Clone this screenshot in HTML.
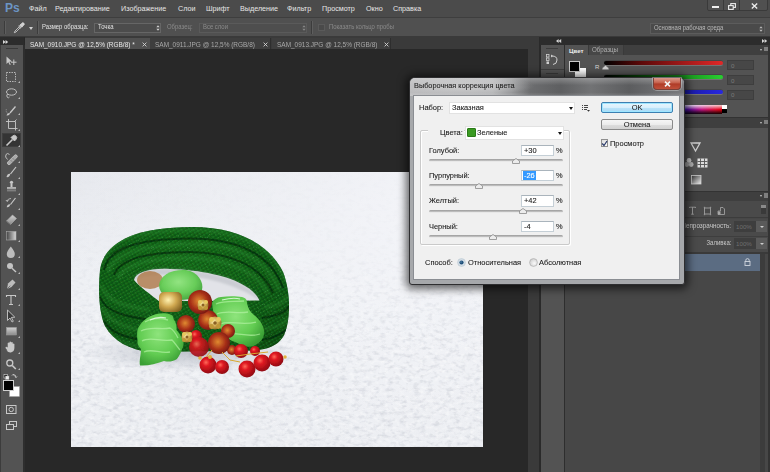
<!DOCTYPE html>
<html><head><meta charset="utf-8">
<style>
*{margin:0;padding:0;box-sizing:border-box}
html,body{width:770px;height:472px;overflow:hidden;background:#282828;font-family:"Liberation Sans",sans-serif}
.a{position:absolute}
.t{position:absolute;white-space:nowrap;line-height:1}
.dt{transform:scaleX(0.92);transform-origin:0 0;-webkit-text-stroke:0.1px currentColor}
#menubar{left:0;top:0;width:770px;height:17px;background:#4b4b4b}
#menubar .t{top:5px;font-size:7.2px;color:#e6e6e6}
#optbar{left:0;top:17px;width:770px;height:20px;background:#505050;border-top:1px solid #3e3e3e;border-bottom:1px solid #3a3a3a}
#tabbar{left:25px;top:37px;width:504px;height:12px;background:#3a3a3a}
#toolbox{left:0;top:37px;width:24px;height:435px;background:#535353}
#dock{left:528px;top:37px;width:242px;height:435px;background:#484848}
</style></head><body>
<div id="menubar" class="a">
  <div class="t" style="left:5px;top:2px;font-size:12px;font-weight:bold;color:#6c95c4">Ps</div>
  <div class="t" style="left:29px">Файл</div>
  <div class="t" style="left:55px">Редактирование</div>
  <div class="t" style="left:121px">Изображение</div>
  <div class="t" style="left:178px">Слои</div>
  <div class="t" style="left:206px">Шрифт</div>
  <div class="t" style="left:240px">Выделение</div>
  <div class="t" style="left:287px">Фильтр</div>
  <div class="t" style="left:322px">Просмотр</div>
  <div class="t" style="left:366px">Окно</div>
  <div class="t" style="left:393px">Справка</div>
  <div class="a" style="left:706.5px;top:-1px;width:61px;height:11.5px;background:#505050;border:1px solid #3a3a3a;border-radius:0 0 2px 2px"></div>
  <div class="a" style="left:723px;top:0;width:1px;height:10.5px;background:#3a3a3a"></div>
  <div class="a" style="left:739px;top:0;width:1px;height:10.5px;background:#3a3a3a"></div>
  <div class="a" style="left:712px;top:6px;width:6.5px;height:1.8px;background:#eee"></div>
  <svg class="a" style="left:727.5px;top:2.5px" width="8" height="7" viewBox="0 0 8 7"><rect x="2.8" y="0.6" width="4.6" height="3.8" fill="none" stroke="#eee" stroke-width="1.1"/><rect x="0.6" y="2.6" width="4.6" height="3.8" fill="#505050" stroke="#eee" stroke-width="1.1"/></svg>
  <svg class="a" style="left:750.5px;top:3px" width="7" height="6" viewBox="0 0 7 6"><path d="M0.8 0.5 L6.2 5.5 M6.2 0.5 L0.8 5.5" stroke="#eee" stroke-width="1.3"/></svg>
</div>
<div id="optbar" class="a">
  <div class="a" style="left:4px;top:3px;width:2px;height:13px;border-left:1px solid #3c3c3c;border-right:1px solid #5e5e5e"></div>
  <svg class="a" style="left:13px;top:4px" width="12" height="12" viewBox="0 0 12 12"><path d="M1.3 10.7 L2 9 L6.3 4.7 L7.3 5.7 L3 10 Z" stroke="#d4d4d4" stroke-width="0.8" fill="none"/><path d="M5.6 4 L8 6.4 M6.8 3.4 L9 1.2 a1 1 0 0 1 1.8 1.8 L8.6 5.2 Z" stroke="#dcdcdc" stroke-width="1" fill="#d0d0d0"/></svg>
  <div class="a" style="left:29px;top:9px;width:0;height:0;border-left:2.5px solid transparent;border-right:2.5px solid transparent;border-top:3px solid #d0d0d0"></div>
  <div class="a" style="left:37px;top:3px;width:2px;height:13px;border-left:1px solid #3c3c3c;border-right:1px solid #5e5e5e"></div>
  <div class="t" style="left:42px;top:5.6px;font-size:6.6px;transform:scaleX(0.9);transform-origin:0 0;color:#e4e4e4">Размер образца:</div>
  <div class="a" style="left:94px;top:4.5px;width:67px;height:10px;background:#4c4c4c;border:1px solid #666"></div>
  <div class="t" style="left:98px;top:6px;font-size:6.6px;transform:scaleX(0.9);transform-origin:0 0;color:#e0e0e0">Точка</div>
  <svg class="a" style="left:155.5px;top:7px" width="4" height="6" viewBox="0 0 4 6"><path d="M0.3 2.3 L2 0.3 L3.7 2.3Z M0.3 3.7 L2 5.7 L3.7 3.7Z" fill="#d0d0d0"/></svg>
  <div class="t" style="left:167px;top:5.6px;font-size:6.6px;transform:scaleX(0.9);transform-origin:0 0;color:#8a8a8a">Образец:</div>
  <div class="a" style="left:199px;top:4.5px;width:108px;height:10px;background:#4e4e4e;border:1px solid #5a5a5a"></div>
  <div class="t" style="left:203px;top:6px;font-size:6.6px;transform:scaleX(0.9);transform-origin:0 0;color:#8c8c8c">Все слои</div>
  <svg class="a" style="left:301.5px;top:7px" width="4" height="6" viewBox="0 0 4 6"><path d="M0.3 2.3 L2 0.3 L3.7 2.3Z M0.3 3.7 L2 5.7 L3.7 3.7Z" fill="#888"/></svg>
  <div class="a" style="left:311px;top:3px;width:2px;height:13px;border-left:1px solid #3c3c3c;border-right:1px solid #5e5e5e"></div>
  <div class="a" style="left:318px;top:6px;width:7px;height:7px;background:#4a4a4a;border:1px solid #5a5a5a"></div>
  <div class="t" style="left:329px;top:6px;font-size:6.6px;transform:scaleX(0.9);transform-origin:0 0;color:#8a8a8a">Показать кольцо пробы</div>
  <div class="a" style="left:650px;top:5px;width:115px;height:11px;background:#4a4a4a;border:1px solid #5c5c5c"></div>
  <div class="t" style="left:654px;top:6.6px;font-size:6.6px;transform:scaleX(0.9);transform-origin:0 0;color:#b8b8b8">Основная рабочая среда</div>
  <svg class="a" style="left:758.5px;top:7.5px" width="4" height="6" viewBox="0 0 4 6"><path d="M0.3 2.3 L2 0.3 L3.7 2.3Z M0.3 3.7 L2 5.7 L3.7 3.7Z" fill="#b8b8b8"/></svg>
</div>
<div id="tabbar" class="a">
  <div class="a" style="left:0;top:1px;width:125px;height:11px;background:#505050"></div>
  <div class="t" style="left:5px;top:3.6px;font-size:7.2px;transform:scaleX(0.9);transform-origin:0 0;color:#e8e8e8">SAM_0910.JPG @ 12,5% (RGB/8) *</div>
  <svg class="a" style="left:116.5px;top:5px" width="5" height="5" viewBox="0 0 5 5"><path d="M0.6 0.6 L4.4 4.4 M4.4 0.6 L0.6 4.4" stroke="#d4d4d4" stroke-width="0.9"/></svg>
  <div class="a" style="left:125px;top:1px;width:121px;height:11px;background:#3e3e3e;border-right:1px solid #2e2e2e"></div>
  <div class="t" style="left:130px;top:3.6px;font-size:7.2px;transform:scaleX(0.9);transform-origin:0 0;color:#a8a8a8">SAM_0911.JPG @ 12,5% (RGB/8)</div>
  <svg class="a" style="left:237.5px;top:5px" width="5" height="5" viewBox="0 0 5 5"><path d="M0.6 0.6 L4.4 4.4 M4.4 0.6 L0.6 4.4" stroke="#d4d4d4" stroke-width="0.9"/></svg>
  <div class="a" style="left:247px;top:1px;width:119px;height:11px;background:#3e3e3e;border-right:1px solid #2e2e2e"></div>
  <div class="t" style="left:252px;top:3.6px;font-size:7.2px;transform:scaleX(0.9);transform-origin:0 0;color:#a8a8a8">SAM_0913.JPG @ 12,5% (RGB/8)</div>
  <svg class="a" style="left:358.5px;top:5px" width="5" height="5" viewBox="0 0 5 5"><path d="M0.6 0.6 L4.4 4.4 M4.4 0.6 L0.6 4.4" stroke="#d4d4d4" stroke-width="0.9"/></svg>
</div>

<div id="toolbox" class="a">
  <div class="a" style="left:0;top:0;width:24px;height:8px;background:#2c2c2c"></div>
  <svg class="a" style="left:2.5px;top:2.5px" width="6" height="4" viewBox="0 0 6 4"><path d="M0 0 L2.6 2 L0 4Z M2.6 0 L5.2 2 L2.6 4Z" fill="#d6d6d6"/></svg>
  <div class="a" style="left:0;top:8px;width:1px;height:427px;background:#3c3c3c"></div>
  <div class="a" style="left:23px;top:8px;width:2px;height:427px;background:#2e2e2e"></div>
  <div class="a" style="left:6px;top:11px;width:12px;height:1px;background:#3a3a3a"></div>
  <div class="a" style="left:2px;top:96px;width:19px;height:14px;background:#343434;border:1px solid #3e3e3e"></div>
  <svg class="a" style="left:0;top:0" width="24" height="435" viewBox="0 37 24 435">
   <defs>
    <linearGradient id="tg1" x1="0" y1="0" x2="1" y2="0"><stop offset="0" stop-color="#444"/><stop offset="1" stop-color="#d8d8d8"/></linearGradient>
    <linearGradient id="tg2" x1="0" y1="0" x2="0" y2="1"><stop offset="0" stop-color="#d0d0d0"/><stop offset="1" stop-color="#8a8a8a"/></linearGradient>
   </defs>
   <g stroke="#c8c8c8" fill="none" stroke-width="0.9">
    <!-- move -->
    <path d="M6.5 56.5 L6.5 64 L8.3 62.3 L9.8 65 L10.8 64.5 L9.4 61.8 L12 61.5 Z" fill="#c8c8c8" stroke="none"/>
    <path d="M13.8 59.5 v5.5 M11 62.2 h5.5" stroke-width="1"/>
    <!-- marquee -->
    <rect x="6.5" y="72.5" width="9" height="9" stroke-dasharray="1.4 1.1"/>
    <!-- lasso -->
    <ellipse cx="11.5" cy="92" rx="5" ry="3.2"/>
    <path d="M7.5 94 q-1.5 2 0 3.5 q1 0.8 2 -0.5"/>
    <!-- quick select -->
    <path d="M6.5 109 a3.5 3.5 0 0 0 3 5" stroke-dasharray="1 0.8" stroke="#9a9a9a"/>
    <path d="M10 113 L15.5 106.5" stroke-width="1.3"/>
    <path d="M10 113 q-3 -0.5 -3.5 2.5 q3 0.5 3.5 -2.5" fill="#c8c8c8" stroke="none"/>
    <!-- crop -->
    <path d="M8.5 119 v9.5 h9 M6 121.5 h9.5 v9 M16.5 119.5 l-2.5 2.5"/>
    <!-- eyedropper (selected) -->
    <path d="M6.5 145.5 L12.5 139.5" stroke-width="1.6"/>
    <path d="M11.5 137.5 l3 3 M12.5 136 a1.8 1.8 0 0 1 3.5 3.5 l-1.5 1.5 l-3.5 -3.5z" fill="#c8c8c8" stroke-width="0.8"/>
    <!-- healing -->
    <path d="M7.5 159.5 q-3 -2.5 -1.5 -5 q1.5 -2 3.5 0"/>
    <path d="M7.8 162 L14.5 155.3 a1.6 1.6 0 0 1 2.3 2.3 L10 164.3 a1.6 1.6 0 0 1 -2.2 -2.3z" fill="#a8a8a8" stroke="#c8c8c8" stroke-width="0.8"/>
    <path d="M10.5 160 l2 2 M12.5 158 l2 2" stroke="#707070" stroke-width="0.6"/>
    <!-- brush -->
    <path d="M16 167 L10.5 174" stroke-width="1.2"/>
    <path d="M10.3 173.8 q-3 -0.5 -3.8 3.3 q3.2 0.4 3.8 -3.3" fill="#c8c8c8" stroke="none"/>
    <!-- stamp -->
    <circle cx="11.5" cy="182.3" r="1.6" fill="#c8c8c8" stroke="none"/>
    <path d="M10.5 183.5 h2 v3.5 h-2z" fill="#c8c8c8" stroke="none"/>
    <path d="M7 187.2 h9 v2.3 h-9z" fill="url(#tg2)" stroke="none"/>
    <path d="M7 190.8 h9" stroke="#9a9a9a"/>
    <!-- history brush -->
    <path d="M15.5 198 L10.5 204.5" stroke-width="1.2"/>
    <path d="M10.3 204.3 q-3 -0.4 -3.6 3 q3 0.4 3.6 -3" fill="#c8c8c8" stroke="none"/>
    <path d="M7 201 q1 -2.5 4 -2.5" stroke="#bdbdbd"/>
    <path d="M6 200 l1 1.5 l1.5 -1" stroke="#bdbdbd"/>
    <!-- eraser -->
    <path d="M6.5 221 L12.5 215 L16.5 218.5 L10.5 224.5 Z" fill="url(#tg2)" stroke="#b0b0b0" stroke-width="0.6"/>
    <path d="M6.5 221 L10.5 224.5" stroke="#707070"/>
    <!-- gradient -->
    <rect x="6.5" y="231.5" width="9.5" height="8.5" fill="url(#tg1)" stroke="#a8a8a8" stroke-width="0.6"/>
    <!-- blur drop -->
    <path d="M10.8 246.5 q-4 5 -4 7.5 a4 4 0 0 0 8 0 q0 -2.5 -4 -7.5z" fill="#bdbdbd" stroke="none"/>
    <!-- dodge -->
    <circle cx="10" cy="266" r="3" fill="#c4c4c4" stroke="none"/>
    <path d="M12 268.2 L16 272" stroke-width="1.4"/>
    <!-- pen -->
    <path d="M7 289 L8 283.5 L12.5 279.5 L15.5 282.5 L11.5 287 Z" fill="#bdbdbd" stroke="none"/>
    <path d="M7 289 L10.3 285.7" stroke="#535353" stroke-width="0.7"/>
    <!-- type -->
    <path d="M6.5 297 v-1.5 h9 v1.5 M11 295.5 v9 M9 304.5 h4" stroke-width="1.1"/>
    <!-- path selection -->
    <path d="M7.5 310 L7.5 320.5 L10 318 L12 322 L13.3 321.3 L11.4 317.4 L14.8 317.2 Z" fill="#3a3a3a" stroke="#c8c8c8" stroke-width="0.9"/>
    <!-- shape -->
    <rect x="6.5" y="327.5" width="10" height="7.5" fill="url(#tg2)" stroke="#a0a0a0" stroke-width="0.5"/>
    <!-- hand -->
    <path d="M7.5 350.5 q-2.5 -2.5 -1.8 -3.5 q0.8 -0.8 2 0.6 v-4.5 q0.9 -1 1.7 0 v3 v-4 q0.9 -1 1.7 0 v4 v-3.5 q0.9 -1 1.7 0 v3.8 v-2.5 q0.9 -0.8 1.6 0 v4 q0 3.5 -3.5 4.5 q-2.5 0.3 -4.4 -2" fill="#c8c8c8" stroke="none"/>
    <!-- zoom -->
    <circle cx="9.8" cy="363" r="3" stroke-width="1.3"/>
    <path d="M12.3 365.5 L15.8 369" stroke-width="1.7"/>
   </g>
   <g fill="#b8b8b8">
    <path d="M18 83 l2 -2 v2z M18 99 l2 -2 v2z M18 115 l2 -2 v2z M18 131 l2 -2 v2z M18 147 l2 -2 v2z M18 163 l2 -2 v2z M18 179 l2 -2 v2z M18 195 l2 -2 v2z M18 210 l2 -2 v2z M18 226 l2 -2 v2z M18 242 l2 -2 v2z M18 258 l2 -2 v2z M18 274 l2 -2 v2z M18 290 l2 -2 v2z M18 306 l2 -2 v2z M18 322 l2 -2 v2z M18 338 l2 -2 v2z M18 354 l2 -2 v2z M18 370 l2 -2 v2z"/>
   </g>
   <!-- colors -->
   <rect x="4" y="374.5" width="3.5" height="3.5" fill="#111" stroke="#ddd" stroke-width="0.6"/>
   <rect x="5.5" y="376" width="3.5" height="3.5" fill="#eee" stroke="#999" stroke-width="0.4"/>
   <path d="M13 374.5 q3 0 3 3 M12 375.5 l1 -1 l1 1 M15 376.5 l1 1 l1 -1" stroke="#ddd" fill="none" stroke-width="0.8"/>
   <rect x="9.5" y="386.5" width="10" height="10" fill="#fff" stroke="#a0a0a0" stroke-width="0.5"/>
   <rect x="3.5" y="380.5" width="10" height="10" fill="#000" stroke="#cfcfcf" stroke-width="1"/>
   <!-- quick mask -->
   <rect x="6.5" y="405.5" width="9.5" height="8" fill="none" stroke="#c8c8c8"/>
   <circle cx="11.2" cy="409.5" r="2.2" fill="none" stroke="#c8c8c8"/>
   <!-- screen mode -->
   <rect x="9.5" y="421.5" width="7" height="5" fill="none" stroke="#c8c8c8"/>
   <rect x="6.5" y="424.5" width="7" height="5" fill="#535353" stroke="#c8c8c8"/>
  </svg>
</div>


<!--PHOTO--><svg class="a" style="left:71px;top:172px" width="412" height="275" viewBox="71 172 412 275">
  <defs>
    <linearGradient id="bgv" x1="0" y1="0" x2="0" y2="1">
      <stop offset="0" stop-color="#e6e8ed"/>
      <stop offset="0.4" stop-color="#eef0f4"/>
      <stop offset="1" stop-color="#eceef2"/>
    </linearGradient>
    <radialGradient id="bgr" cx="0.85" cy="0.15" r="0.9">
      <stop offset="0" stop-color="#f4f5f9" stop-opacity="0.9"/>
      <stop offset="1" stop-color="#f4f5f9" stop-opacity="0"/>
    </radialGradient>
    <filter id="tex" x="0" y="0" width="100%" height="100%">
      <feTurbulence type="fractalNoise" baseFrequency="0.15 0.26" numOctaves="3" seed="3"/>
      <feColorMatrix type="matrix" values="0 0 0 0 0.66  0 0 0 0 0.68  0 0 0 0 0.73  0 0 0 -2.6 1.38"/>
    </filter>
    <filter id="tex2" x="0" y="0" width="100%" height="100%">
      <feTurbulence type="fractalNoise" baseFrequency="0.2 0.3" numOctaves="2" seed="11"/>
      <feColorMatrix type="matrix" values="0 0 0 0 1  0 0 0 0 1  0 0 0 0 1  0 0 0 2.6 -1.25"/>
    </filter>
    <linearGradient id="tmg" x1="0" y1="0" x2="0" y2="1">
      <stop offset="0" stop-color="#fff" stop-opacity="0.06"/>
      <stop offset="0.28" stop-color="#fff" stop-opacity="0.18"/>
      <stop offset="0.6" stop-color="#fff" stop-opacity="0.9"/>
      <stop offset="1" stop-color="#fff" stop-opacity="1"/>
    </linearGradient>
    <mask id="texmask" maskUnits="userSpaceOnUse" x="71" y="172" width="412" height="275"><rect x="71" y="172" width="412" height="275" fill="url(#tmg)"/></mask>
    <filter id="soft" x="-5%" y="-5%" width="110%" height="110%"><feGaussianBlur stdDeviation="0.6"/></filter><filter id="blur1"><feGaussianBlur stdDeviation="1"/></filter><filter id="blur05"><feGaussianBlur stdDeviation="0.5"/></filter>
    <filter id="btex" x="0" y="0" width="100%" height="100%">
      <feTurbulence type="turbulence" baseFrequency="0.55 0.7" numOctaves="1" seed="7"/>
      <feColorMatrix type="matrix" values="0 0 0 0 0.25  0 0 0 0 0.62  0 0 0 0 0.28  0 0 0 3 -1.1"/>
      <feComposite in2="SourceGraphic" operator="in"/>
    </filter>
    <pattern id="beads" width="3.4" height="3.2" patternUnits="userSpaceOnUse" patternTransform="rotate(-30)">
      <rect width="3.4" height="3.2" fill="#083c0b"/>
      <ellipse cx="1.7" cy="1.6" rx="1.55" ry="1.3" fill="#126a19"/>
      <ellipse cx="1.3" cy="1.15" rx="0.75" ry="0.55" fill="#2a9032"/>
    </pattern>
    <radialGradient id="grn" cx="0.45" cy="0.35" r="0.75">
      <stop offset="0" stop-color="#1a7a20"/>
      <stop offset="0.7" stop-color="#0f5a14"/>
      <stop offset="1" stop-color="#0a400d"/>
    </radialGradient>
    <radialGradient id="leaf" cx="0.45" cy="0.4" r="0.65">
      <stop offset="0" stop-color="#8ee47c"/>
      <stop offset="0.6" stop-color="#62cc52"/>
      <stop offset="1" stop-color="#3a9e34"/>
    </radialGradient>
    <radialGradient id="red" cx="0.38" cy="0.35" r="0.7">
      <stop offset="0" stop-color="#ff6a5a"/>
      <stop offset="0.3" stop-color="#e01a22"/>
      <stop offset="1" stop-color="#8a0810"/>
    </radialGradient>
    <radialGradient id="amb" cx="0.45" cy="0.45" r="0.7">
      <stop offset="0" stop-color="#e08a30"/>
      <stop offset="0.5" stop-color="#a83018"/>
      <stop offset="1" stop-color="#5a0c0c"/>
    </radialGradient>
    <radialGradient id="gold" cx="0.4" cy="0.4" r="0.7">
      <stop offset="0" stop-color="#fff2b0"/>
      <stop offset="0.5" stop-color="#d0a850"/>
      <stop offset="1" stop-color="#806020"/>
    </radialGradient>
    <radialGradient id="shad" cx="0.5" cy="0.5" r="0.5">
      <stop offset="0" stop-color="#a0a6b2" stop-opacity="0.6"/>
      <stop offset="1" stop-color="#a0a6b2" stop-opacity="0"/>
    </radialGradient>
    <clipPath id="bclip"><path id="bpath" d="M192 227 C240 227 270 246 283 272 C291 292 291 322 283 337 C277 346 268 349 255 350.5 L150 352 C130 350 113 341 105 326 C99 313 98 290 100 270 C103 248 125 227 192 227 Z"/></clipPath>
  </defs>
  <rect x="71" y="172" width="412" height="275" fill="url(#bgv)"/>
  <rect x="71" y="172" width="412" height="275" fill="url(#bgr)"/>
  <g mask="url(#texmask)">
    <rect x="71" y="172" width="412" height="275" filter="url(#tex)" opacity="0.85"/>
    <rect x="71" y="172" width="412" height="275" filter="url(#tex2)" opacity="0.5"/>
  </g>
  <ellipse cx="190" cy="352" rx="105" ry="20" fill="url(#shad)"/>
<g filter="url(#soft)" id="softall">
  <!-- bracelet -->
  <g clip-path="url(#bclip)">
    <rect x="95" y="220" width="200" height="140" fill="url(#beads)"/>
    <rect x="95" y="220" width="200" height="140" fill="url(#grn)" opacity="0.5"/>
    <rect x="95" y="220" width="200" height="140" fill="#3aa040" filter="url(#btex)" opacity="0.35"/>
    <g fill="none" stroke="#3fa846" stroke-width="4" opacity="0.22" filter="url(#blur1)">
      <path d="M103 262 C108 240 135 231 190 230 C245 230 276 250 286 282"/>
      <path d="M108 272 C113 254 140 245 190 244 C240 244 268 261 279 290"/>
      <path d="M118 278 C125 264 150 258 190 258 C230 259 258 273 268 294"/>
      <path d="M101 285 C106 300 120 306 150 310"/>
      <path d="M102 308 C110 322 124 328 150 332"/>
      <path d="M107 331 C115 341 126 345 150 348"/>
      <path d="M287 296 C285 302 278 306 264 307"/>
      <path d="M288 318 C284 324 276 328 264 329"/>
    </g>
    <g fill="none" stroke="#04200a" stroke-width="2" opacity="0.6" filter="url(#blur05)">
      <path d="M104 270 C108 249 135 239 190 238.5 C240 238.5 272 256 283 288"/>
      <path d="M114 275 C120 258 148 252 190 252 C232 252.5 262 267 273 293"/>
      <path d="M100 297 C105 311 122 317 160 321"/>
      <path d="M104 321 C111 333 124 338 155 342"/>
      <path d="M289 306 C286 312 276 316 262 318"/>
      <path d="M288 328 C283 334 274 338 262 340"/>
    </g>
  </g>
  <!-- hole -->
  <path d="M134 280 C136 272 150 268 170 269 C200 270 230 276 245 286 C252 290 257 295 259.5 300.5 L200 301 C180 301 168 300 160 302 C150 294 140 287 134 280 Z" fill="#e2e3e8"/>
  <path d="M134 280 C136 272 150 268 170 269 C200 270 230 276 245 286 C252 290 257 295 259.5 300.5 C248 292 225 281 195 277 C170 274 148 274 134 280 Z" fill="#a8acb4" opacity="0.4" filter="url(#blur1)"/>
  <!-- back items -->
  <ellipse cx="150" cy="280" rx="13" ry="9" fill="#b07a48" opacity="0.8" filter="url(#blur05)"/>
  <path d="M159 285 C160 275 172 269 186 270 C198 272 204 282 202 290 C200 296 192 300 180 300 C168 300 159 294 159 285 Z" fill="url(#leaf)" opacity="0.95"/>
  <!-- gold tube -->
  <rect x="159" y="292" width="23" height="20" rx="5" fill="url(#gold)"/>
  <!-- left leaf -->
  <path d="M137.2 332 C138 326 142 322 147 318 C153 314 161 312.5 167 313.5 C171 314 174 316 173.5 319 C176 322 177 326 176.5 330 C180 334 184 340 183.6 345 C182 351 179 356 177 359 C172 362 168 362 164 361 C156 364 148 366 140 365.5 C139 360 141 355 141 349 C138 346 137 343 137.5 340.5 C137 337 137 334 137.2 332 Z" fill="url(#leaf)"/>
  <g stroke="#b8f5a8" stroke-width="1.3" fill="none" opacity="0.65" filter="url(#blur05)">
    <path d="M145 322 C152 318 160 318 168 320"/>
    <path d="M141 331 C150 326 160 330 170 328 C174 330 176 334 178 338"/>
    <path d="M142 341 C150 336 160 342 172 340 C176 344 178 348 180 350"/>
    <path d="M144 352 C152 348 160 354 170 352"/>
  </g>
  <path d="M150 320 C156 317 162 317 166 318" stroke="#f0fff0" stroke-width="1.2" fill="none" opacity="0.8"/>
  <!-- right leaf -->
  <path d="M212 302.7 C214 299 217 297.5 221 297 C228 296 236 296 242 297 C246 298 247 300 247 303 C248 308 250 312 254 315 C259 319 263 324 264 330 C265 336 262 341 257 344 C253 347 248 347.5 244 346 C240 344 237 343 235 342 C231 341 228 339 227 336 C222 331 218 326 216 320 C214 315 212.5 309 212 302.7 Z" fill="url(#leaf)"/>
  <g stroke="#b8f5a8" stroke-width="1.3" fill="none" opacity="0.65" filter="url(#blur05)">
    <path d="M216 304 C224 300 234 302 244 301"/>
    <path d="M217 314 C226 310 236 314 248 312"/>
    <path d="M220 324 C230 320 242 326 256 322"/>
    <path d="M228 334 C238 332 248 338 260 334"/>
  </g>
  <path d="M222 300 C230 298 236 298 240 299" stroke="#f0fff0" stroke-width="1.1" fill="none" opacity="0.8"/>
  <!-- beads -->
  <circle cx="208" cy="320" r="10" fill="url(#amb)"/>
  <circle cx="228" cy="331" r="7" fill="url(#amb)"/>
  <circle cx="196" cy="336" r="6" fill="url(#red)"/>
  <circle cx="232" cy="350" r="5" fill="url(#amb)"/>
  <circle cx="200" cy="302" r="12" fill="url(#amb)"/>
  <g transform="translate(203 305)"><circle r="5.5" fill="url(#gold)"/><circle cx="-3" cy="-3" r="2" fill="#e8c860"/><circle cx="3" cy="-3" r="2" fill="#e8c860"/><circle cx="3" cy="3" r="2" fill="#c09838"/><circle cx="-3" cy="3" r="2" fill="#c09838"/><circle r="1.5" fill="#8a6020"/></g>
  <circle cx="186" cy="324" r="9" fill="url(#amb)"/>
  <circle cx="219" cy="343" r="11" fill="url(#amb)"/>
  <circle cx="199" cy="347" r="10" fill="url(#red)" opacity="0.9"/>
  <g transform="translate(215 323)"><circle r="6.5" fill="url(#gold)"/><circle cx="-3.5" cy="-3.5" r="2.4" fill="#e8c860"/><circle cx="3.5" cy="-3.5" r="2.4" fill="#e8c860"/><circle cx="3.5" cy="3.5" r="2.4" fill="#c09838"/><circle cx="-3.5" cy="3.5" r="2.4" fill="#c09838"/><circle r="1.8" fill="#8a6020"/></g>
  <g transform="translate(187 337)"><circle r="5.5" fill="url(#gold)"/><circle cx="-3" cy="-3" r="2" fill="#e8c860"/><circle cx="3" cy="-3" r="2" fill="#e8c860"/><circle cx="3" cy="3" r="2" fill="#c09838"/><circle cx="-3" cy="3" r="2" fill="#c09838"/><circle r="1.5" fill="#8a6020"/></g>
  <circle cx="241" cy="351" r="7" fill="url(#red)"/>
  <circle cx="255" cy="351" r="5" fill="url(#red)"/>
  <circle cx="208" cy="365" r="8.5" fill="url(#red)"/>
  <circle cx="222" cy="367" r="7" fill="url(#red)"/>
  <circle cx="247" cy="369" r="8.5" fill="url(#red)"/>
  <circle cx="262" cy="363" r="8.5" fill="url(#red)"/>
  <circle cx="276" cy="359" r="7.5" fill="url(#red)"/>
  <g stroke="#d8a830" stroke-width="1" fill="none">
    <path d="M222 352 L230 360 L240 362 M236 356 L250 354 L268 352 M206 357 L212 350"/>
  </g>
  <circle cx="210" cy="357" r="2" fill="#e0b040"/>
  <circle cx="285" cy="357" r="1.8" fill="#e0b040"/>
  <circle cx="200" cy="358" r="1.8" fill="#e0b040"/>
</g>
</svg>
<!--/PHOTO-->
<div id="dock" class="a">
  <!-- coords relative: x-528, y-37 -->
  <div class="a" style="left:0;top:0;width:11px;height:435px;background:#3a3a3a"></div>
  <div class="a" style="left:11px;top:0;width:2px;height:435px;background:#2a2a2a"></div>
  <div class="a" style="left:12px;top:0;width:230px;height:7.5px;background:#2c2c2c"></div>
  <svg class="a" style="left:28px;top:2px" width="6" height="4" viewBox="0 0 6 4"><path d="M2.6 0 L0 2 L2.6 4Z M5.2 0 L2.6 2 L5.2 4Z" fill="#d6d6d6"/></svg>
  <svg class="a" style="left:234px;top:2px" width="6" height="4" viewBox="0 0 6 4"><path d="M0 0 L2.6 2 L0 4Z M2.6 0 L5.2 2 L2.6 4Z" fill="#d6d6d6"/></svg>
  <!-- small icon column -->
  <div class="a" style="left:13px;top:7.5px;width:22.5px;height:428px;background:#535353"></div>
  <div class="a" style="left:35.5px;top:7.5px;width:1.5px;height:428px;background:#2e2e2e"></div>
  <div class="a" style="left:18px;top:11px;width:12px;height:1px;background:#3c3c3c"></div>
  <svg class="a" style="left:18px;top:17px" width="12" height="11" viewBox="0 0 12 11">
    <rect x="0.5" y="0.5" width="2.5" height="2.5" fill="none" stroke="#cfcfcf" stroke-width="0.8"/>
    <rect x="0.5" y="4" width="2.5" height="2.5" fill="none" stroke="#cfcfcf" stroke-width="0.8"/>
    <rect x="0.5" y="7.5" width="2.5" height="2.5" fill="#cfcfcf"/>
    <path d="M6 2 q5 0 5 4 q0 4 -4 4.5" fill="none" stroke="#cfcfcf" stroke-width="1"/>
    <path d="M5 0.5 l2 1.5 l-2 1.5z" fill="#cfcfcf"/>
  </svg>
  <div class="a" style="left:13px;top:32px;width:22.5px;height:1px;background:#3e3e3e"></div>
  <div class="a" style="left:18px;top:36px;width:12px;height:1px;background:#3c3c3c"></div>
  <!-- main panel -->
  <div class="a" style="left:37px;top:7.5px;width:202.5px;height:428px;background:#474747"></div>
  <div class="a" style="left:239.5px;top:7.5px;width:2.5px;height:428px;background:#333"></div>
  <!-- color panel -->
  <div class="a" style="left:37px;top:7.5px;width:202.5px;height:10px;background:#3f3f3f"></div>
  <div class="a" style="left:37px;top:7.5px;width:23px;height:10px;background:#535353"></div>
  <div class="t" style="left:41px;top:10.5px;font-size:6.2px;font-weight:bold;color:#ececec">Цвет</div>
  <div class="a" style="left:60px;top:7.5px;width:35.5px;height:10px;background:#474747;border-left:1px solid #3a3a3a;border-right:1px solid #3a3a3a"></div>
  <div class="t" style="left:63.5px;top:10.3px;font-size:6.6px;color:#b0b0b0;transform:scaleX(0.94);transform-origin:0 0">Образцы</div>
  <div class="a" style="left:232px;top:11.5px;width:0;height:0;border-left:1.5px solid transparent;border-right:1.5px solid transparent;border-top:2px solid #c8c8c8"></div>
  <div class="a" style="left:235.5px;top:9.5px;width:4px;height:4.5px;background:#7e7e7e"></div>
  <div class="a" style="left:37px;top:17.5px;width:202.5px;height:62px;background:#535353"></div>
  <div class="a" style="left:40.5px;top:24px;width:11px;height:11px;background:#000;border:1px solid #c8c8c8"></div>
  <div class="a" style="left:46.5px;top:30.5px;width:11px;height:9.5px;background:#fff;border-top:none"></div>
  <div class="a" style="left:40.5px;top:24px;width:11px;height:11px;background:#000;border:1px solid #c8c8c8"></div>
  <div class="t" style="left:67px;top:27px;font-size:6px;color:#d8d8d8">R</div>
  <div class="a" style="left:76px;top:23.5px;width:119px;height:4px;border-radius:2px;background:linear-gradient(90deg,#000 0%,#5a0808 30%,#e02828 100%);box-shadow:0 1px 0 #727272,0 -0.5px 0 #3a3a3a"></div>
  <svg class="a" style="left:73.5px;top:28px" width="7" height="5" viewBox="0 0 7 5"><path d="M0.5 4.5 L0.5 3 L3.5 0.5 L6.5 3 L6.5 4.5 Z" fill="#d0d0d0" stroke="#888" stroke-width="0.5"/></svg>
  <div class="a" style="left:76px;top:38px;width:119px;height:4px;border-radius:2px;background:linear-gradient(90deg,#000 0%,#084a08 30%,#28d030 100%);box-shadow:0 1px 0 #727272,0 -0.5px 0 #3a3a3a"></div>
  <div class="a" style="left:76px;top:52.5px;width:119px;height:4px;border-radius:2px;background:linear-gradient(90deg,#000 0%,#08085a 30%,#2828e0 100%);box-shadow:0 1px 0 #727272,0 -0.5px 0 #3a3a3a"></div>
  <div class="a" style="left:199px;top:23px;width:27px;height:10px;background:#474747;border:1px solid #3e3e3e"></div>
  <div class="t" style="left:203px;top:25.5px;font-size:6.2px;color:#7a7a7a">0</div>
  <div class="a" style="left:199px;top:38px;width:27px;height:10px;background:#474747;border:1px solid #3e3e3e"></div>
  <div class="t" style="left:203px;top:40.5px;font-size:6.2px;color:#7a7a7a">0</div>
  <div class="a" style="left:199px;top:52.5px;width:27px;height:10px;background:#474747;border:1px solid #3e3e3e"></div>
  <div class="t" style="left:203px;top:55px;font-size:6.2px;color:#7a7a7a">0</div>
  <div class="a" style="left:69px;top:68px;width:125px;height:8.5px;background:linear-gradient(90deg,#ff0000 0%,#ffff00 17%,#00ff00 33%,#00ffff 50%,#2020ff 67%,#5010a0 72%,#c01880 84%,#e01030 95%,#e00010 100%)"></div>
  <div class="a" style="left:69px;top:68px;width:125px;height:8.5px;background:linear-gradient(180deg,rgba(255,255,255,0.8) 0%,rgba(255,255,255,0.35) 30%,rgba(0,0,0,0) 50%,rgba(0,0,0,0.5) 75%,rgba(0,0,0,0.9) 100%)"></div>
  <div class="a" style="left:194px;top:68px;width:5px;height:4.2px;background:#fff"></div>
  <div class="a" style="left:194px;top:72.2px;width:5px;height:4.3px;background:#000"></div>
  <!-- adjustments header -->
  <div class="a" style="left:37px;top:79.5px;width:202.5px;height:11.5px;background:#3f3f3f;border-top:1px solid #333"></div>
  <div class="a" style="left:232px;top:84.5px;width:0;height:0;border-left:1.5px solid transparent;border-right:1.5px solid transparent;border-top:2px solid #c8c8c8"></div>
  <div class="a" style="left:235.5px;top:82.5px;width:4px;height:4.5px;background:#7e7e7e"></div>
  <div class="a" style="left:37px;top:91px;width:202.5px;height:62.5px;background:#535353"></div>
  <svg class="a" style="left:150px;top:100px" width="40" height="50" viewBox="0 0 40 50">
    <rect x="0" y="5" width="3" height="8" fill="none" stroke="#bdbdbd" stroke-width="0.8"/>
    <path d="M13 6 L22 6 L17.5 14 Z" fill="none" stroke="#d0d0d0" stroke-width="1.3"/>
    <circle cx="11" cy="23.5" r="2.4" fill="#c4c4c4"/><circle cx="8.8" cy="27.5" r="2.4" fill="#a0a0a0"/><circle cx="13.2" cy="27.5" r="2.4" fill="#b0b0b0"/>
    <rect x="19.5" y="21.5" width="10" height="9" fill="#ddd"/>
    <path d="M22.5 21.5 v9 M26.5 21.5 v9 M19.5 24.5 h10 M19.5 27.5 h10" stroke="#535353" stroke-width="0.9"/>
    <rect x="0" y="38" width="3" height="8" fill="none" stroke="#bdbdbd" stroke-width="0.8"/>
    <rect x="13.5" y="38.5" width="9.5" height="8.5" fill="url(#gg)" stroke="#ccc" stroke-width="0.8"/>
    <defs><linearGradient id="gg" x1="0" y1="0" x2="1" y2="1"><stop offset="0" stop-color="#333"/><stop offset="1" stop-color="#eee"/></linearGradient></defs>
  </svg>
  <!-- layers header -->
  <div class="a" style="left:37px;top:153.5px;width:202.5px;height:10.5px;background:#3f3f3f;border-top:1px solid #333"></div>
  <div class="a" style="left:232px;top:158px;width:0;height:0;border-left:1.5px solid transparent;border-right:1.5px solid transparent;border-top:2px solid #c8c8c8"></div>
  <div class="a" style="left:235.5px;top:156px;width:4px;height:4.5px;background:#7e7e7e"></div>
  <div class="a" style="left:37px;top:164px;width:202.5px;height:17px;background:#4a4a4a;border-bottom:1px solid #3c3c3c"></div>
  <svg class="a" style="left:160px;top:169px" width="50" height="10" viewBox="0 0 50 10">
    <path d="M1.5 2 v-0.8 h6 v0.8 M4.5 1.2 v7 M3.2 8.2 h2.6" stroke="#a8a8a8" stroke-width="0.8" fill="none"/>
    <rect x="16.5" y="2" width="6" height="6" fill="none" stroke="#a8a8a8" stroke-width="0.8"/>
    <path d="M15.8 1.3 h1.4 M21.8 1.3 h1.4 M15.8 8.7 h1.4 M21.8 8.7 h1.4" stroke="#a8a8a8" stroke-width="0.8"/>
    <path d="M30 8.5 v-3.5 h2.5 v-3.5 h2.5 l1.5 1.5 v5.5 z" fill="none" stroke="#a8a8a8" stroke-width="0.8"/>
    <rect x="30" y="5.5" width="2.5" height="3" fill="#a8a8a8"/>
  </svg>
  <div class="a" style="left:233px;top:168px;width:5px;height:9px;background:#3a3a3a"></div>
  <div class="a" style="left:233px;top:168px;width:5px;height:3px;background:#8a8a8a"></div>
  <div class="a" style="left:37px;top:182px;width:202.5px;height:33px;background:#4a4a4a"></div>
  <div class="a" style="left:37px;top:198.5px;width:202.5px;height:1px;background:#3e3e3e"></div>
  <div class="t" style="right:39px;top:186px;font-size:6.9px;color:#c8c8c8;transform:scaleX(0.92);transform-origin:100% 0">Непрозрачность:</div>
  <div class="a" style="left:206px;top:184px;width:22px;height:10.5px;background:#3e3e3e"></div>
  <div class="t" style="left:208px;top:186.5px;font-size:6.2px;color:#6e6e6e">100%</div>
  <div class="a" style="left:228px;top:184px;width:10.5px;height:10.5px;background:#5a5a5a"></div>
  <div class="a" style="left:231.5px;top:188.5px;width:0;height:0;border-left:2px solid transparent;border-right:2px solid transparent;border-top:2.5px solid #ccc"></div>
  <div class="t" style="right:39px;top:203px;font-size:6.9px;color:#c8c8c8;transform:scaleX(0.88);transform-origin:100% 0">Заливка:</div>
  <div class="a" style="left:206px;top:201px;width:22px;height:10.5px;background:#3e3e3e"></div>
  <div class="t" style="left:208px;top:203.5px;font-size:6.2px;color:#6e6e6e">100%</div>
  <div class="a" style="left:228px;top:201px;width:10.5px;height:10.5px;background:#5a5a5a"></div>
  <div class="a" style="left:231.5px;top:205.5px;width:0;height:0;border-left:2px solid transparent;border-right:2px solid transparent;border-top:2.5px solid #ccc"></div>
  <div class="a" style="left:37px;top:215px;width:202.5px;height:1.5px;background:#3a3a3a"></div>
  <div class="a" style="left:37px;top:216.5px;width:195px;height:17px;background:#5b6c82"></div>
  <svg class="a" style="left:216px;top:221px" width="7" height="8" viewBox="0 0 7 8">
    <path d="M1.8 3.5 v-1.2 a1.7 1.7 0 0 1 3.4 0 v1.2" fill="none" stroke="#d0d6de" stroke-width="0.9"/>
    <rect x="1" y="3.5" width="5" height="4" fill="none" stroke="#d0d6de" stroke-width="0.9"/>
  </svg>
  <div class="a" style="left:232px;top:216.5px;width:5px;height:219px;background:#3c3c3c"></div>
</div>

<div id="dlg" class="a" style="left:408.5px;top:77px;width:276px;height:207.5px;border-radius:6px 6px 3px 3px;background:#a6a8ab;box-shadow:0 1px 9px 3px rgba(0,0,0,0.6);border:1px solid #2e2e30">
  <div class="a" style="left:0;top:0;width:274px;height:18px;border-radius:5px 5px 0 0;background:linear-gradient(90deg,#bcbcbe 0%,#b4b5b7 30%,#98999b 37%,#6c6d6f 44%,#5e5f61 55%,#727375 66%,#5c5d5f 80%,#7a7b7e 100%)"></div>
  <div class="a" style="left:0;top:0;width:274px;height:18px;border-radius:5px 5px 0 0;background:linear-gradient(180deg,rgba(255,255,255,0.25),rgba(255,255,255,0) 40%,rgba(0,0,0,0) 80%,rgba(255,255,255,0.15))"></div>
  <div class="a" style="left:0;top:0;width:160px;height:17px;background:radial-gradient(ellipse 70px 9px at 55px 8px,rgba(215,215,215,0.7),rgba(215,215,215,0))"></div>
  <div class="t dt" style="left:4.5px;top:4.3px;font-size:8.1px;color:#1e1e1e;transform:scaleX(0.905)">Выборочная коррекция цвета</div>
  <div class="a" style="left:243px;top:0px;width:28.5px;height:11.5px;border-radius:0 0 4px 4px;background:linear-gradient(180deg,#dc9a8c 0%,#c86652 40%,#b03c28 55%,#c0503a 100%);border:1px solid #7a4038;border-top:none;box-shadow:0 0 0 1px rgba(255,255,255,0.3)"></div>
  <svg class="a" style="left:254px;top:2.5px" width="7" height="6" viewBox="0 0 7 6"><path d="M1 0.7 L6 5.3 M6 0.7 L1 5.3" stroke="#f4f4f4" stroke-width="1.6"/></svg>
  <div class="a" style="left:3.5px;top:17px;width:267px;height:185px;background:#f0f0f0;border:1px solid #8a8d92"></div>
</div>
<div id="dc">
<div class="t dt" style="left:419px;top:104.1px;font-size:8.1px;color:#202020">Набор:</div>
<div class="a" style="left:448.5px;top:101.5px;width:126.5px;height:12.5px;background:#fff;border:1px solid #e2e2e2"></div>
<div class="t dt" style="left:451.5px;top:104.1px;font-size:8.1px;color:#202020">Заказная</div>
<div class="a" style="left:568.5px;top:106.5px;width:0;height:0;border-left:2.5px solid transparent;border-right:2.5px solid transparent;border-top:3px solid #111"></div>
<svg class="a" style="left:581px;top:104px" width="9" height="8" viewBox="0 0 9 8"><path d="M1 1.5 h1 M3 1.5 h4 M1 3.5 h1 M3 3.5 h4 M1 5.5 h1 M3 5.5 h3" stroke="#333" stroke-width="0.9"/><path d="M6 6 h3 l-1.5 1.8z" fill="#333"/></svg>
<div class="a" style="left:601px;top:102px;width:72px;height:11px;border-radius:2px;background:linear-gradient(180deg,#eaf6fd 0%,#d7effc 50%,#bce4f9 51%,#a7d9f5 100%);border:1px solid #3c7fb1;box-shadow:inset 0 0 0 1px #9fe6ff"></div>
<div class="t dt" style="left:601px;top:104.1px;width:78.3px;text-align:center;font-size:8.1px;color:#202020">OK</div>
<div class="a" style="left:601px;top:118.5px;width:72px;height:11px;border-radius:2px;background:linear-gradient(180deg,#f6f6f6 0%,#ececec 50%,#dedede 51%,#d2d2d2 100%);border:1px solid #8a8a8a"></div>
<div class="t dt" style="left:601px;top:120.6px;width:78.3px;text-align:center;font-size:8.1px;color:#202020">Отмена</div>
<div class="a" style="left:600.5px;top:139px;width:7.5px;height:7.5px;background:linear-gradient(135deg,#dcdcdc,#fbfbfb);border:1px solid #8f8f8f"></div>
<svg class="a" style="left:601px;top:139.5px" width="7" height="7" viewBox="0 0 7 7"><path d="M1.2 3.5 L3 5.5 L6 1" stroke="#2a3a6a" stroke-width="1.2" fill="none"/></svg>
<div class="t dt" style="left:609.5px;top:139.6px;font-size:8.1px;color:#202020">Просмотр</div>
<div class="a" style="left:420px;top:130px;width:150px;height:114.5px;border:1px solid #cacaca;border-radius:2px;box-shadow:inset 1px 1px 0 #fff,1px 1px 0 #fff"></div>
<div class="a" style="left:428px;top:128px;width:36px;height:4px;background:#f0f0f0"></div>
<div class="t dt" style="left:439.5px;top:129.1px;font-size:8.1px;color:#202020">Цвета:</div>
<div class="a" style="left:464.5px;top:126px;width:99.5px;height:13.5px;background:#fff;border:1px solid #e2e2e2"></div>
<div class="a" style="left:466.5px;top:128px;width:9.5px;height:9px;background:#3a9a22;border:1px solid #2a7a18;border-radius:1px"></div>
<div class="t dt" style="left:477px;top:129.1px;font-size:8.1px;color:#202020">Зеленые</div>
<div class="a" style="left:557.5px;top:131.5px;width:0;height:0;border-left:2.5px solid transparent;border-right:2.5px solid transparent;border-top:3px solid #111"></div>
<div class="t dt" style="left:428.5px;top:146.7px;font-size:8.1px;color:#202020">Голубой:</div>
<div class="a" style="left:520.5px;top:144.6px;width:33.5px;height:11.6px;background:#fff;border:1px solid #c5cfd6;border-top-color:#aab4bc"></div>
<div class="t dt" style="left:524px;top:146.7px;font-size:8.1px;color:#202020">+30</div>
<div class="t dt" style="left:556px;top:146.7px;font-size:8.1px;color:#202020">%</div>
<div class="a" style="left:429px;top:159.1px;width:134px;height:3px;border-radius:1.5px;background:linear-gradient(180deg,#9a9a9a,#c8c8c8);border-bottom:1px solid #e8e8e8"></div>
<svg class="a" style="left:512.0px;top:157.6px" width="8" height="6" viewBox="0 0 8 6"><path d="M0.5 5.5 L0.5 3 L4 0.5 L7.5 3 L7.5 5.5 Z" fill="#ececec" stroke="#8a8a8a" stroke-width="0.8"/></svg>
<div class="t dt" style="left:428.5px;top:172px;font-size:8.1px;color:#202020">Пурпурный:</div>
<div class="a" style="left:520.5px;top:169.9px;width:33.5px;height:11.6px;background:#fff;border:1px solid #c5cfd6;border-top-color:#aab4bc"></div>
<div class="a" style="left:522.5px;top:171.4px;width:13px;height:8.6px;background:#3399ff"></div>
<div class="t dt" style="left:523.5px;top:172px;font-size:8.1px;color:#fff">-26</div>
<div class="t dt" style="left:556px;top:172px;font-size:8.1px;color:#202020">%</div>
<div class="a" style="left:429px;top:184.4px;width:134px;height:3px;border-radius:1.5px;background:linear-gradient(180deg,#9a9a9a,#c8c8c8);border-bottom:1px solid #e8e8e8"></div>
<svg class="a" style="left:474.5px;top:182.9px" width="8" height="6" viewBox="0 0 8 6"><path d="M0.5 5.5 L0.5 3 L4 0.5 L7.5 3 L7.5 5.5 Z" fill="#ececec" stroke="#8a8a8a" stroke-width="0.8"/></svg>
<div class="t dt" style="left:428.5px;top:197.1px;font-size:8.1px;color:#202020">Желтый:</div>
<div class="a" style="left:520.5px;top:195.0px;width:33.5px;height:11.6px;background:#fff;border:1px solid #c5cfd6;border-top-color:#aab4bc"></div>
<div class="t dt" style="left:524px;top:197.1px;font-size:8.1px;color:#202020">+42</div>
<div class="t dt" style="left:556px;top:197.1px;font-size:8.1px;color:#202020">%</div>
<div class="a" style="left:429px;top:209.5px;width:134px;height:3px;border-radius:1.5px;background:linear-gradient(180deg,#9a9a9a,#c8c8c8);border-bottom:1px solid #e8e8e8"></div>
<svg class="a" style="left:519.0px;top:208.0px" width="8" height="6" viewBox="0 0 8 6"><path d="M0.5 5.5 L0.5 3 L4 0.5 L7.5 3 L7.5 5.5 Z" fill="#ececec" stroke="#8a8a8a" stroke-width="0.8"/></svg>
<div class="t dt" style="left:428.5px;top:222.7px;font-size:8.1px;color:#202020">Черный:</div>
<div class="a" style="left:520.5px;top:220.6px;width:33.5px;height:11.6px;background:#fff;border:1px solid #c5cfd6;border-top-color:#aab4bc"></div>
<div class="t dt" style="left:524px;top:222.7px;font-size:8.1px;color:#202020">-4</div>
<div class="t dt" style="left:556px;top:222.7px;font-size:8.1px;color:#202020">%</div>
<div class="a" style="left:429px;top:235.1px;width:134px;height:3px;border-radius:1.5px;background:linear-gradient(180deg,#9a9a9a,#c8c8c8);border-bottom:1px solid #e8e8e8"></div>
<svg class="a" style="left:489.0px;top:233.6px" width="8" height="6" viewBox="0 0 8 6"><path d="M0.5 5.5 L0.5 3 L4 0.5 L7.5 3 L7.5 5.5 Z" fill="#ececec" stroke="#8a8a8a" stroke-width="0.8"/></svg>

<div class="t dt" style="left:425px;top:258.6px;font-size:8.1px;color:#202020">Способ:</div>
<svg class="a" style="left:457px;top:258px" width="9" height="9" viewBox="0 0 9 9"><circle cx="4.5" cy="4.5" r="3.9" fill="#d6e0e8" stroke="#b4c2cc" stroke-width="0.6"/><circle cx="4.5" cy="4.5" r="2.1" fill="#1f4f78"/><circle cx="4" cy="4" r="0.7" fill="#6a9ac0"/></svg>
<div class="t dt" style="left:467.5px;top:258.6px;font-size:8.1px;color:#202020">Относительная</div>
<svg class="a" style="left:528.5px;top:258px" width="9" height="9" viewBox="0 0 9 9"><defs><radialGradient id="rg2" cx="0.6" cy="0.6" r="0.6"><stop offset="0" stop-color="#fafafa"/><stop offset="1" stop-color="#d0d0d0"/></radialGradient></defs><circle cx="4.5" cy="4.5" r="3.9" fill="url(#rg2)" stroke="#a8a8a8" stroke-width="0.6"/></svg>
<div class="t dt" style="left:539px;top:258.6px;font-size:8.1px;color:#202020">Абсолютная</div>
</div>
</body></html>
